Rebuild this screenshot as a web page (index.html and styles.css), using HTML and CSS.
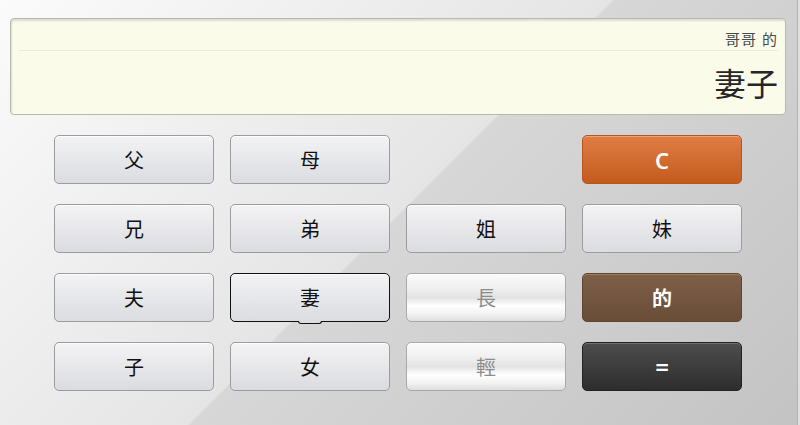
FILE: index.html
```html
<!DOCTYPE html>
<html lang="zh-Hant">
<head>
    <meta charset="UTF-8">
    <meta name="viewport" content="width=device-width, initial-scale=1.0">
    <title>親戚計算機</title>
    <link rel="stylesheet" href="styles.css">
</head>
<body>
    <div class="calculator">
        <div class="display">
            <div class="history">哥哥 的</div>
            <div class="result">妻子</div>
        </div>

        <div class="keys">
            <button class="key">父</button>
            <button class="key">母</button>
            <span class="blank"></span>
            <button class="key key-clear">C</button>

            <button class="key">兄</button>
            <button class="key">弟</button>
            <button class="key">姐</button>
            <button class="key">妹</button>

            <button class="key">夫</button>
            <button class="key key-active">妻</button>
            <button class="key key-light">長</button>
            <button class="key key-of">的</button>

            <button class="key">子</button>
            <button class="key">女</button>
            <button class="key key-light">輕</button>
            <button class="key key-equal">=</button>
        </div>
    </div>
</body>
</html>
```

FILE: styles.css
```css
body {
    margin: 0;
    font-family: 'Noto Sans', 'Noto Sans CJK TC', sans-serif;
    background-color: #e0e0e0;
}

.calculator {
    width: 797px;
    height: 422px;
    background: linear-gradient(135deg, #fbfbfb 0%, #e5e5e5 49.5%, #d7d7d7 49.7%, #c3c3c3 100%);
    border-right: 1px solid #b4b4b4;
    border-bottom: 1px solid #b4b4b4;
    border-bottom-right-radius: 5px;
    padding-top: 18px;
    box-sizing: content-box;
}

.display {
    margin-left: 10px;
    width: 776px;
    height: 97px;
    background-color: #fbfbea;
    border: 1px solid #b9b9a9;
    border-radius: 4px;
    box-shadow: inset 1px 2px 2px rgba(0, 0, 0, 0.12);
    display: flex;
    flex-direction: column;
    padding: 0 7px 0 8px;
    box-sizing: border-box;
}

.history {
    height: 31px;
    border-bottom: 1px solid #ecebd8;
    text-align: right;
    font-size: 15px;
    color: #4a4a4a;
    line-height: 40px;
    letter-spacing: 1px;
}

.result {
    text-align: right;
    font-size: 32px;
    color: #262626;
    line-height: 66px;
}

.keys {
    display: grid;
    grid-template-columns: repeat(4, 160px);
    grid-auto-rows: 49px;
    column-gap: 16px;
    row-gap: 20px;
    padding: 20px 0 0 54px;
}

.key {
    position: relative;
    font-family: 'Noto Sans', 'Noto Sans CJK TC', sans-serif;
    font-size: 20px;
    color: #111;
    border: 1px solid #9c9c9c;
    border-radius: 5px;
    background: linear-gradient(#f3f3f5, #dbdce0);
    box-shadow: inset 0 1px 0 rgba(255, 255, 255, 0.8);
    padding: 0;
    cursor: pointer;
}

.key-active {
    border-color: #111;
}

.key-active::after {
    content: '';
    position: absolute;
    left: 50%;
    bottom: -3px;
    width: 22px;
    height: 2px;
    margin-left: -12px;
    background-color: #dcdde0;
    border: 1px solid #111;
    border-top: none;
    border-radius: 0 0 3px 3px;
}

.key-light {
    color: #8c8c8c;
    border-color: #a9a9a9;
    background: linear-gradient(#fbfbfb 0%, #f0f0f0 30%, #e3e3e3 50%, #ffffff 68%, #f2f2f2 85%, #dedede 100%);
}

.key-clear {
    color: #fff;
    font-size: 22px;
    font-weight: 600;
    border-color: #b4561f;
    background: linear-gradient(#df7d46, #c45b1d);
    box-shadow: inset 0 1px 0 rgba(255, 200, 160, 0.5);
}

.key-of {
    color: #fff;
    font-weight: bold;
    border-color: #5d4532;
    background: linear-gradient(#7e6049, #6a4d37);
    box-shadow: inset 0 1px 0 rgba(200, 170, 140, 0.4);
}

.key-equal {
    color: #fff;
    font-size: 24px;
    font-weight: 600;
    border-color: #222;
    background: linear-gradient(#4d4d4d, #2d2d2d);
    box-shadow: inset 0 1px 0 rgba(255, 255, 255, 0.2);
}
```
